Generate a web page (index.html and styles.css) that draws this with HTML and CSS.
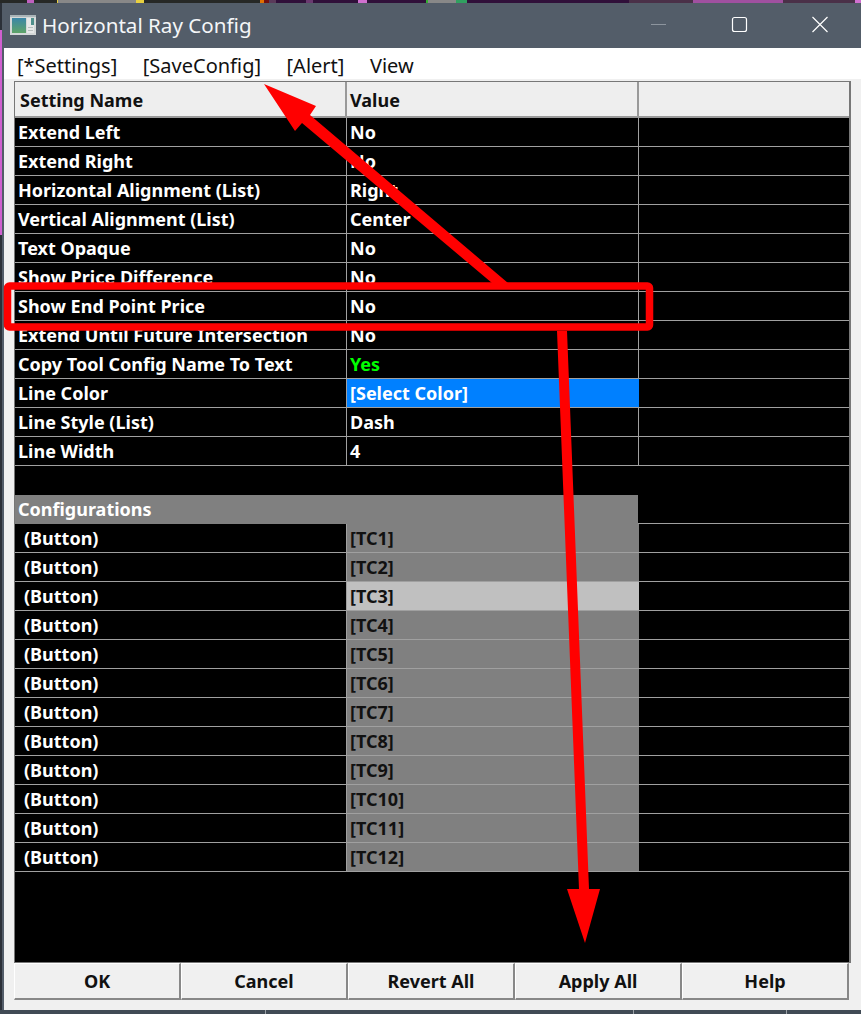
FILE: index.html
```html
<!DOCTYPE html>
<html lang="en">
<head>
<meta charset="utf-8">
<title>Horizontal Ray Config</title>
<link rel="stylesheet" href="styles.css">
</head>
<body>
<div class="desktop-strip"></div>
<div class="window">
  <header class="titlebar">
    <svg class="app-icon" width="26" height="20" viewBox="0 0 26 20">
      <defs><linearGradient id="pane" x1="0" y1="0" x2="0" y2="1"><stop offset="0" stop-color="#3a86a8"/><stop offset="1" stop-color="#5fa468"/></linearGradient></defs>
      <rect x="0" y="0" width="26" height="20" fill="#d4d8d8"/>
      <rect x="0" y="0" width="26" height="2" fill="#aab4b8"/>
      <rect x="2" y="3" width="14" height="15" fill="url(#pane)"/>
      <rect x="17" y="3" width="7" height="15" fill="#e6e8e8"/>
      <rect x="21" y="3" width="3" height="7" fill="#4f8f8c"/>
      <rect x="18" y="12" width="5" height="1" fill="#b8bebe"/>
      <rect x="18" y="15" width="5" height="1" fill="#b8bebe"/>
    </svg>
    <span class="title">Horizontal Ray Config</span>
    <div class="controls">
      <svg class="ctl" width="46" height="20" viewBox="0 0 46 20"><path d="M16 10.5h15" stroke="#8d959e" stroke-width="1"/></svg>
      <svg class="ctl" width="46" height="20" viewBox="0 0 46 20"><rect x="16.5" y="3.5" width="14" height="14" rx="2" fill="none" stroke="#fff" stroke-width="1.2"/></svg>
      <svg class="ctl" width="46" height="20" viewBox="0 0 46 20"><path d="M15.5 3l15 15M30.5 3l-15 15" stroke="#fff" stroke-width="1.2" fill="none"/></svg>
    </div>
  </header>
  <nav class="menubar">
    <span>[*Settings]</span><span>[SaveConfig]</span><span>[Alert]</span><span>View</span>
  </nav>
  <main class="content">
    <section class="grid">
      <div class="row head"><div class="cell name">Setting Name</div><div class="cell">Value</div><div class="cell"></div></div>
      <div class="row"><div class="cell">Extend Left</div><div class="cell">No</div><div class="cell"></div></div>
      <div class="row"><div class="cell">Extend Right</div><div class="cell">No</div><div class="cell"></div></div>
      <div class="row"><div class="cell">Horizontal Alignment (List)</div><div class="cell">Right</div><div class="cell"></div></div>
      <div class="row"><div class="cell">Vertical Alignment (List)</div><div class="cell">Center</div><div class="cell"></div></div>
      <div class="row"><div class="cell">Text Opaque</div><div class="cell">No</div><div class="cell"></div></div>
      <div class="row"><div class="cell">Show Price Difference</div><div class="cell">No</div><div class="cell"></div></div>
      <div class="row"><div class="cell">Show End Point Price</div><div class="cell">No</div><div class="cell"></div></div>
      <div class="row"><div class="cell">Extend Until Future Intersection</div><div class="cell">No</div><div class="cell"></div></div>
      <div class="row"><div class="cell">Copy Tool Config Name To Text</div><div class="cell yes">Yes</div><div class="cell"></div></div>
      <div class="row"><div class="cell">Line Color</div><div class="cell select">[Select Color]</div><div class="cell"></div></div>
      <div class="row"><div class="cell">Line Style (List)</div><div class="cell">Dash</div><div class="cell"></div></div>
      <div class="row"><div class="cell">Line Width</div><div class="cell">4</div><div class="cell"></div></div>
      <div class="row blank"></div>
      <div class="row section"><div class="section-label">Configurations</div><div class="cell plain"></div></div>
      <div class="row"><div class="cell btn">(Button)</div><div class="cell tc">[TC1]</div><div class="cell"></div></div>
      <div class="row"><div class="cell btn">(Button)</div><div class="cell tc">[TC2]</div><div class="cell"></div></div>
      <div class="row"><div class="cell btn">(Button)</div><div class="cell tc active">[TC3]</div><div class="cell"></div></div>
      <div class="row"><div class="cell btn">(Button)</div><div class="cell tc">[TC4]</div><div class="cell"></div></div>
      <div class="row"><div class="cell btn">(Button)</div><div class="cell tc">[TC5]</div><div class="cell"></div></div>
      <div class="row"><div class="cell btn">(Button)</div><div class="cell tc">[TC6]</div><div class="cell"></div></div>
      <div class="row"><div class="cell btn">(Button)</div><div class="cell tc">[TC7]</div><div class="cell"></div></div>
      <div class="row"><div class="cell btn">(Button)</div><div class="cell tc">[TC8]</div><div class="cell"></div></div>
      <div class="row"><div class="cell btn">(Button)</div><div class="cell tc">[TC9]</div><div class="cell"></div></div>
      <div class="row"><div class="cell btn">(Button)</div><div class="cell tc">[TC10]</div><div class="cell"></div></div>
      <div class="row"><div class="cell btn">(Button)</div><div class="cell tc">[TC11]</div><div class="cell"></div></div>
      <div class="row"><div class="cell btn">(Button)</div><div class="cell tc">[TC12]</div><div class="cell"></div></div>
    </section>
    <footer class="actions">
      <button>OK</button><button>Cancel</button><button>Revert All</button><button>Apply All</button><button>Help</button>
    </footer>
  </main>
</div>
<div class="desktop-bottom"></div>
<svg class="annotations" width="861" height="1014" viewBox="0 0 861 1014">
  <path d="M264 84L316 106L310 115L508 283L492 283L302 123L295 131Z" fill="#ff0000"/>
  <rect x="7.5" y="286" width="642" height="41" rx="2" fill="none" stroke="#ff0000" stroke-width="7.5"/>
  <path d="M557 331L567 331L589 889L600 889L585 943L567 889L579 889Z" fill="#ff0000"/>
</svg>
</body>
</html>
```

FILE: styles.css
```css
html, body {
  margin: 0;
  padding: 0;
}
body {
  width: 861px;
  height: 1014px;
  overflow: hidden;
  position: relative;
  background: linear-gradient(180deg, #2b3038 0 30px, #d060d0 30px 235px, #2b3038 235px);
  font-family: "Noto Sans", "Open Sans", sans-serif;
}
.desktop-strip {
  height: 3px;
  background: linear-gradient(90deg, #262826 0 27px, #c060c0 27px 34px, #262826 34px 57px, #e8d040 57px 58px, #888 58px 136px, #e8d040 136px 144px, #262826 144px 260px, #e07000 260px 264px, #701010 264px 269px, #5a3a5a 269px 276px, #30103a 276px 306px, #6a3a70 306px 313px, #30103a 313px 358px, #d070d0 358px 367px, #30103a 367px 426px, #30b030 426px 428px, #888 428px 456px, #30a060 456px 467px, #30103a 467px 629px, #4a3048 629px 693px, #a050a0 693px 783px, #4a3048 783px 855px, #d070d0 855px);
}
.window {
  margin-left: 2px;
  height: 1007px;
  display: flex;
  flex-direction: column;
  background: #535d69;
}
.titlebar {
  height: 45px;
  flex: none;
  display: flex;
  align-items: center;
  color: #fff;
  box-sizing: border-box;
  padding-left: 8px;
}
.app-icon {
  margin-right: 6px;
  margin-top: -1px;
  flex: none;
}
.title {
  font-size: 20.6px;
  margin-top: -1px;
  color: #f4f6f8;
}
.controls {
  margin-left: auto;
  display: flex;
  gap: 35px;
  padding-right: 18px;
  margin-top: -3px;
}
.ctl {
  display: block;
  width: 46px;
}
.menubar {
  height: 31px;
  flex: none;
  margin-left: 2px;
  background: #fff;
  display: flex;
  align-items: center;
  gap: 25.5px;
  padding-left: 13px;
  font-size: 20px;
  color: #111;
  box-sizing: border-box;
  padding-top: 4px;
}
.content {
  flex: 1;
  margin-left: 2px;
  padding: 2px 0 0 10px;
  display: flex;
  flex-direction: column;
  background: #f0f0f0;
}
.grid {
  width: 837px;
  height: 882px;
  flex: none;
  box-sizing: border-box;
  background: #000;
  border: 1px solid #777;
  border-right: 2px solid #777;
  color: #fff;
  font-size: 18px;
  font-weight: 700;
}
.row {
  display: grid;
  grid-template-columns: 332px 292px 1fr;
  height: 29px;
  box-sizing: border-box;
  border-bottom: 1px solid #a0a0a0;
  line-height: 29px;
}
.head {
  height: 36px;
  background: #eeeeee;
  color: #111;
  border-bottom: 2px solid #999;
  line-height: 37px;
}
.head .name {
  padding-left: 5px;
}
.cell {
  box-sizing: border-box;
  padding-left: 3px;
  border-right: 1px solid #a0a0a0;
  white-space: nowrap;
  overflow: hidden;
}
.cell:last-child {
  border-right: 0;
}
.head .cell {
  border-right: 2px solid #999;
}
.head .cell:last-child {
  border-right: 0;
}
.blank {
  border-bottom: 0;
}
.section {
  grid-template-columns: 623px 1fr;
}
.section-label {
  background: #808080;
  padding-left: 3px;
}
.plain {
  border-right: 0;
}
.btn {
  padding-left: 9px;
}
.tc {
  background: #808080;
  color: #111;
  border-right: 0;
  padding-left: 3px;
}
.active {
  background: #c0c0c0;
}
.yes {
  color: #00ff00;
}
.select {
  background: #0080ff;
  border-right: 0;
}
.actions {
  display: flex;
  width: 835px;
  height: 37px;
  flex: none;
}
.actions button {
  flex: 1;
  margin: 0;
  padding: 0;
  box-sizing: border-box;
  background: #f0f0f0;
  color: #111;
  border: 1px solid #999;
  border-top-color: #fff;
  border-left-color: #fff;
  border-right: 2px solid #888;
  border-bottom: 2px solid #888;
  font: 700 18px "Noto Sans", sans-serif;
}
.desktop-bottom {
  height: 4px;
  background: linear-gradient(90deg, #414b55 0 265px, #9aa0a6 265px 266px, #414b55 266px 633px, #9aa0a6 633px 634px, #414b55 634px 786px, #9aa0a6 786px 787px, #414b55 787px);
}
.annotations {
  position: absolute;
  left: 0;
  top: 0;
  pointer-events: none;
}
```
